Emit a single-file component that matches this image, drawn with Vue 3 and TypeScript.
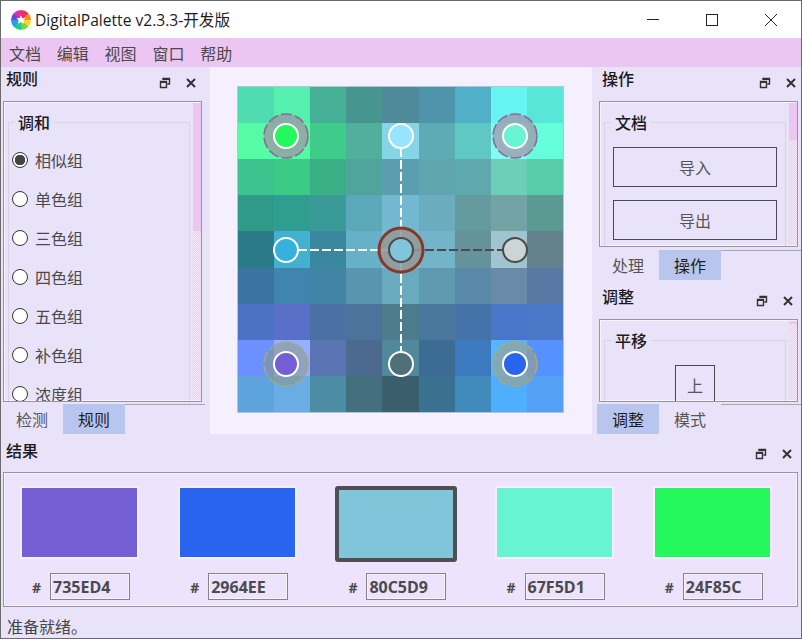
<template>
  <div class="window">
    <header class="titlebar">
      <span class="logo">
        <svg viewBox="0 0 20 20" width="20" height="20">
          <polygon points="10,5.5 11.4,8.2 14.5,8 12.4,10.4 13,13.6 10,12.2 7,13.6 7.6,10.4 5.5,8 8.6,8.2" fill="#fff" />
        </svg>
      </span>
      <span class="app-title">DigitalPalette v2.3.3-开发版</span>
      <div class="win-buttons">
        <svg width="14" height="14" viewBox="0 0 14 14"><path d="M1 6.5H13" stroke="#222" fill="none" /></svg>
        <svg width="14" height="14" viewBox="0 0 14 14"><rect x="1.5" y="1.5" width="11" height="11" stroke="#222" fill="none" /></svg>
        <svg width="14" height="14" viewBox="0 0 14 14"><path d="M1 1L13 13M13 1L1 13" stroke="#222" fill="none" /></svg>
      </div>
    </header>

    <nav class="menubar">
      <span v-for="m in menus" :key="m" class="menu-item">{{ m }}</span>
    </nav>

    <div class="main">
      <section class="side left">
        <div class="dock-head">
          <span class="dock-title">规则</span>
          <svg class="ico" width="12" height="12" viewBox="0 0 12 12"><path d="M4 3V1.5H10.5V7H8.5M1.5 4.5H7.5V10.5H1.5Z M4 2.2H10.5 M1.5 5.2H7.5" stroke="#333" stroke-width="1.4" fill="none" /></svg>
          <svg class="ico close" width="12" height="12" viewBox="0 0 12 12"><path d="M2 2L10 10M10 2L2 10" stroke="#333" stroke-width="2" fill="none" /></svg>
        </div>
        <div class="frame rules">
          <div class="frame-body">
            <fieldset class="group">
              <legend>调和</legend>
              <div v-for="(r, i) in rules" :key="r" class="radio-row">
                <span class="radio" :class="{ on: i === 0 }"></span>
                <span>{{ r }}</span>
              </div>
            </fieldset>
          </div>
          <div class="scroll"><div class="thumb thumb-rules"></div></div>
        </div>
        <div class="tabs">
          <span class="tab">检测</span>
          <span class="tab active">规则</span>
          <span class="tab-line"></span>
        </div>
      </section>

      <section class="center">
        <div class="board">
          <div class="cells">
            <div v-for="(c, i) in cells" :key="i" :style="{ background: c }"></div>
          </div>
          <svg class="overlay" width="325" height="325" viewBox="0 0 325 325">
            <path d="M163 49V163M163 163V277M48 163H163" stroke="#fff" stroke-width="2" stroke-dasharray="9 3" fill="none" />
            <path d="M163 163H277" stroke="#4a4a4a" stroke-width="2" stroke-dasharray="9 3" fill="none" />
            <circle v-for="h in halos" :key="h.x + '-' + h.y" :cx="h.x" :cy="h.y" r="22" :fill="h.fill" :stroke="h.stroke" stroke-width="1.6" stroke-dasharray="11 3" />
            <circle cx="163" cy="163" r="22" fill="rgba(150,150,150,0.85)" stroke="#85392a" stroke-width="3" />
            <circle v-for="n in nodes" :key="n.color" :cx="n.x" :cy="n.y" r="12" :fill="n.color" :stroke="n.dark ? '#4a4a4a' : '#fff'" stroke-width="2" />
          </svg>
        </div>
      </section>

      <section class="side right">
        <div class="dock-head">
          <span class="dock-title">操作</span>
          <svg class="ico" width="12" height="12" viewBox="0 0 12 12"><path d="M4 3V1.5H10.5V7H8.5M1.5 4.5H7.5V10.5H1.5Z M4 2.2H10.5 M1.5 5.2H7.5" stroke="#333" stroke-width="1.4" fill="none" /></svg>
          <svg class="ico close" width="12" height="12" viewBox="0 0 12 12"><path d="M2 2L10 10M10 2L2 10" stroke="#333" stroke-width="2" fill="none" /></svg>
        </div>
        <div class="frame ops">
          <div class="frame-body">
            <fieldset class="group">
              <legend>文档</legend>
              <button class="btn">导入</button>
              <button class="btn">导出</button>
            </fieldset>
          </div>
          <div class="scroll"><div class="thumb thumb-ops"></div></div>
        </div>
        <div class="tabs upper">
          <span class="tab">处理</span>
          <span class="tab active">操作</span>
          <span class="tab-line"></span>
        </div>
        <div class="dock-head second">
          <span class="dock-title">调整</span>
          <svg class="ico" width="12" height="12" viewBox="0 0 12 12"><path d="M4 3V1.5H10.5V7H8.5M1.5 4.5H7.5V10.5H1.5Z M4 2.2H10.5 M1.5 5.2H7.5" stroke="#333" stroke-width="1.4" fill="none" /></svg>
          <svg class="ico close" width="12" height="12" viewBox="0 0 12 12"><path d="M2 2L10 10M10 2L2 10" stroke="#333" stroke-width="2" fill="none" /></svg>
        </div>
        <div class="frame adjust">
          <div class="frame-body">
            <fieldset class="group">
              <legend>平移</legend>
              <button class="btn small">上</button>
            </fieldset>
          </div>
          <div class="scroll"><div class="thumb thumb-adjust"></div></div>
        </div>
        <div class="tabs">
          <span class="tab active">调整</span>
          <span class="tab">模式</span>
          <span class="tab-line"></span>
        </div>
      </section>
    </div>

    <section class="result">
      <div class="dock-head">
        <span class="dock-title">结果</span>
        <svg class="ico" width="12" height="12" viewBox="0 0 12 12"><path d="M4 3V1.5H10.5V7H8.5M1.5 4.5H7.5V10.5H1.5Z M4 2.2H10.5 M1.5 5.2H7.5" stroke="#333" stroke-width="1.4" fill="none" /></svg>
        <svg class="ico close" width="12" height="12" viewBox="0 0 12 12"><path d="M2 2L10 10M10 2L2 10" stroke="#333" stroke-width="2" fill="none" /></svg>
      </div>
      <div class="frame results">
        <div class="swatches">
          <div v-for="(s, i) in swatches" :key="s" class="swatch-col">
            <div class="swatch" :class="{ selected: i === 2 }" :style="{ background: '#' + s }"></div>
            <div class="hex-row">
              <span class="hash">#</span>
              <span class="hex">{{ s }}</span>
            </div>
          </div>
        </div>
        <div class="scroll"><div class="thumb thumb-results"></div></div>
      </div>
    </section>

    <footer class="status">准备就绪。</footer>
  </div>
</template>

<script setup lang="ts">
const menus = ['文档', '编辑', '视图', '窗口', '帮助']
const rules = ['相似组', '单色组', '三色组', '四色组', '五色组', '补色组', '浓度组']
const swatches = ['735ED4', '2964EE', '80C5D9', '67F5D1', '24F85C']

const cells: string[] = [
  '#4fdcb0', '#55f0ad', '#45b096', '#46968f', '#4f8a9a', '#4f94ab', '#51b0c8', '#66f5f2', '#58e6d6',
  '#55fba5', '#55f8a5', '#3fcb8a', '#50b09c', '#85d5e5', '#5fabb5', '#5fc8c5', '#80fdf4', '#66ffdc',
  '#3cc48f', '#3ccb87', '#3aae84', '#4fa59c', '#5a9eb0', '#5fa6b0', '#5ea9ae', '#6ecfb8', '#58cba8',
  '#309a88', '#2f9e90', '#3a9a98', '#5aa8b8', '#72b8d0', '#6cacbf', '#639b9f', '#73a3a4', '#5a9a92',
  '#2b7a8a', '#44b0d0', '#3a88a0', '#66b0c8', '#7cc0d4', '#74b4c8', '#66929c', '#a0c4d0', '#64828c',
  '#3a74a0', '#4084b0', '#4284a5', '#5896b0', '#6aaabf', '#609ab0', '#5a88a8', '#6a8aaa', '#5a78a4',
  '#4c72c4', '#5a70c8', '#4a70a4', '#4c749a', '#4c7c8c', '#4a789c', '#4572a8', '#4a76ca', '#4c78c8',
  '#6c90ff', '#94b0ff', '#5a74b4', '#4c6a90', '#52889c', '#3c6c94', '#3c7ac0', '#58b4ff', '#5592ff',
  '#5ea4dc', '#6cace4', '#4c8ca4', '#44707e', '#3a5e6c', '#3a7090', '#408abc', '#50aeff', '#54a0f4'
]

const halos = [
  { x: 48, y: 49, stroke: '#8a6a9a', fill: 'rgba(165,140,160,0.68)' },
  { x: 277, y: 49, stroke: '#8a6a9a', fill: 'rgba(165,140,160,0.68)' },
  { x: 48, y: 277, stroke: '#9fa88a', fill: 'rgba(140,150,120,0.5)' },
  { x: 277, y: 277, stroke: '#a8a878', fill: 'rgba(165,160,120,0.55)' }
]

const nodes = [
  { x: 48, y: 49, color: '#24f85c', dark: false },
  { x: 277, y: 49, color: '#67f5d1', dark: false },
  { x: 163, y: 49, color: '#96e4ff', dark: false },
  { x: 48, y: 163, color: '#36b0dc', dark: false },
  { x: 163, y: 163, color: '#80c5d9', dark: true },
  { x: 277, y: 163, color: '#ccd4d6', dark: true },
  { x: 48, y: 277, color: '#735ed4', dark: false },
  { x: 163, y: 277, color: '#4e7078', dark: false },
  { x: 277, y: 277, color: '#2964ee', dark: false }
]
</script>

<style>
html,
body {
  margin: 0;
  background: #e9e3fa;
}
</style>

<style scoped>
.window {
  width: 802px;
  height: 639px;
  box-sizing: border-box;
  border: 1px solid #6a6a6a;
  background: #e9e3fa;
  display: flex;
  flex-direction: column;
  overflow: hidden;
  font-family: "Noto Sans CJK SC", "Noto Sans", sans-serif;
  font-size: 16px;
  color: #4a4a4a;
}

.titlebar {
  height: 37px;
  flex: none;
  background: #fff;
  display: flex;
  align-items: center;
  padding-left: 10px;
}

.logo {
  width: 20px;
  height: 20px;
  border-radius: 50%;
  background: conic-gradient(#f03050 0 45deg, #f88a20 45deg 90deg, #f8d820 90deg 135deg, #70d840 135deg 180deg, #20c890 180deg 225deg, #20a0e8 225deg 270deg, #6848d8 270deg 315deg, #e030a8 315deg 360deg);
}

.logo svg {
  display: block;
}

.app-title {
  margin-left: 4px;
  font-family: "Open Sans", "Noto Sans CJK SC", sans-serif;
  font-size: 15.6px;
  color: #1c1c1c;
  white-space: nowrap;
}

.win-buttons {
  margin-left: auto;
  display: flex;
  gap: 45px;
  padding-right: 23px;
}

.menubar {
  height: 29px;
  flex: none;
  background: #ecc6f3;
  display: flex;
  align-items: center;
  padding-left: 8px;
}

.menu-item {
  width: 47.8px;
  flex: none;
}

.main {
  height: 367px;
  flex: none;
  display: flex;
}

.side {
  display: flex;
  flex-direction: column;
  flex: none;
}

.left {
  width: 209px;
  padding-left: 2px;
  box-sizing: border-box;
}

.right {
  width: 209px;
  padding-left: 7px;
  box-sizing: border-box;
}

.dock-head {
  height: 34px;
  flex: none;
  display: flex;
  position: relative;
  color: #111;
}

.left .dock-head {
  margin-left: 3px;
  width: 191px;
}

.right .dock-head {
  padding-left: 3px;
  width: 195px;
}

.dock-head.second {
  height: 39px;
  padding-top: 5px;
  box-sizing: border-box;
}

.dock-title {
  font-size: 16px;
  font-weight: 500;
  line-height: 23px;
  color: #1a1a1a;
}

.ico {
  margin-left: auto;
  margin-top: 10px;
}

.ico.close {
  margin-left: 14px;
}

.frame {
  box-sizing: border-box;
  border: 1px solid #98949f;
  box-shadow: inset 0 0 0 1px #f6f2ff;
  display: flex;
  overflow: hidden;
  background: #e9e3fa;
}

.frame.rules {
  width: 199px;
  height: 301px;
  flex: none;
}

.frame.ops {
  width: 199px;
  height: 146px;
  flex: none;
}

.frame.adjust {
  width: 199px;
  height: 83px;
  flex: none;
}

.frame-body {
  flex: 1;
  min-width: 0;
  padding: 9px 0 0 4px;
}

.group {
  box-sizing: border-box;
  width: 182px;
  margin: 0;
  padding: 6px 0 0;
  border: 1px solid #d8d2e6;
  min-height: 320px;
}

.ops .group,
.adjust .group {
  padding-top: 13px;
}

.group legend {
  margin-left: 5px;
  padding: 0 4px;
  font-size: 16px;
  font-weight: 500;
  line-height: 23px;
  color: #1a1a1a;
}

.ops .group legend,
.adjust .group legend {
  margin-left: 6px;
}

.radio-row {
  height: 39px;
  display: flex;
  align-items: center;
  gap: 7px;
  padding-left: 3px;
}

.radio {
  width: 16px;
  height: 16px;
  box-sizing: border-box;
  border: 1px solid #333;
  border-radius: 50%;
  background: #fff;
  flex: none;
}

.radio.on {
  background: radial-gradient(circle, #444 0 5px, #fff 5.5px);
}

.btn {
  display: block;
  box-sizing: border-box;
  width: 164px;
  height: 40px;
  margin: 0 0 13px 8px;
  padding: 0;
  border: 1px solid #4a4a52;
  background: transparent;
  font: inherit;
  color: #555;
}

.btn.small {
  width: 40px;
  height: 40px;
  margin-left: 70px;
}

.scroll {
  width: 8px;
  flex: none;
  margin: 1px 0 1px 3px;
  background: repeating-conic-gradient(#e8c8ee 0 25%, #f6f2fc 0 50%) 0 0 / 2px 2px;
}

.frame .frame-body + .scroll {
  margin-left: 2px;
}

.thumb {
  background: #ecc6f3;
}

.thumb-rules {
  height: 128px;
}

.thumb-ops {
  height: 37px;
}

.thumb-adjust {
  height: 3px;
}

.thumb-results {
  height: 41px;
}

.tabs {
  height: 30px;
  flex: none;
  margin: 2px 0 0 -2px;
  display: flex;
}

.tabs.upper {
  margin-top: 3px;
}

.left .tabs {
  width: 204px;
}

.tab {
  width: 62px;
  flex: none;
  display: flex;
  align-items: center;
  justify-content: center;
  color: #555;
}

.tab.active {
  background: #b8c6ef;
  color: #1e1e1e;
}

.tab-line {
  flex: 1;
  height: 1px;
  background: #a8a4b0;
}

.center {
  width: 382px;
  flex: none;
  background: #f5f0fe;
  padding-top: 19px;
  box-sizing: border-box;
}

.board {
  position: relative;
  width: 327px;
  height: 327px;
  box-sizing: border-box;
  margin-left: 27px;
  border: 1px solid #b4c4d4;
}

.cells {
  display: grid;
  grid-template-columns: repeat(9, 1fr);
  grid-template-rows: repeat(9, 1fr);
  width: 100%;
  height: 100%;
}

.overlay {
  position: absolute;
  left: 0;
  top: 0;
}

.result {
  height: 180px;
  flex: none;
  padding-left: 2px;
}

.result .dock-head {
  height: 38px;
  padding: 5px 0 0 3px;
  box-sizing: border-box;
  width: 790px;
}

.result .ico {
  margin-top: 9px;
}

.result .ico.close {
  margin-left: 14px;
}

.frame.results {
  width: 795px;
  height: 135px;
  background: #ede3fc;
}

.swatches {
  flex: 1;
  display: flex;
  padding: 15px 0 0 18px;
}

.swatch-col {
  width: 158.2px;
  flex: none;
}

.swatch {
  width: 115px;
  height: 69px;
  box-sizing: border-box;
  box-shadow: 0 0 0 2px #f4eeff;
  margin-bottom: 16px;
}

.swatch.selected {
  width: 122px;
  height: 76px;
  border: 4px solid #4f4f53;
  border-radius: 3px;
  box-shadow: none;
  margin: -2px -3px 11px -3px;
}

.hex-row {
  display: flex;
  align-items: center;
  margin-left: 10px;
}

.hash {
  width: 18px;
  font-family: "Open Sans", sans-serif;
  font-weight: 700;
  font-size: 14px;
  position: relative;
  top: 1px;
}

.hex {
  width: 80px;
  height: 27px;
  box-sizing: border-box;
  border: 1px solid #858288;
  box-shadow: inset 0 0 0 1px #f6f2ff;
  padding-left: 2px;
  font-family: "Open Sans", sans-serif;
  font-weight: 700;
  font-size: 16px;
  line-height: 27px;
  color: #4a4a50;
}

.status {
  flex: 1;
  padding-left: 6px;
  line-height: 24px;
  font-size: 16px;
  color: #444;
}
</style>
